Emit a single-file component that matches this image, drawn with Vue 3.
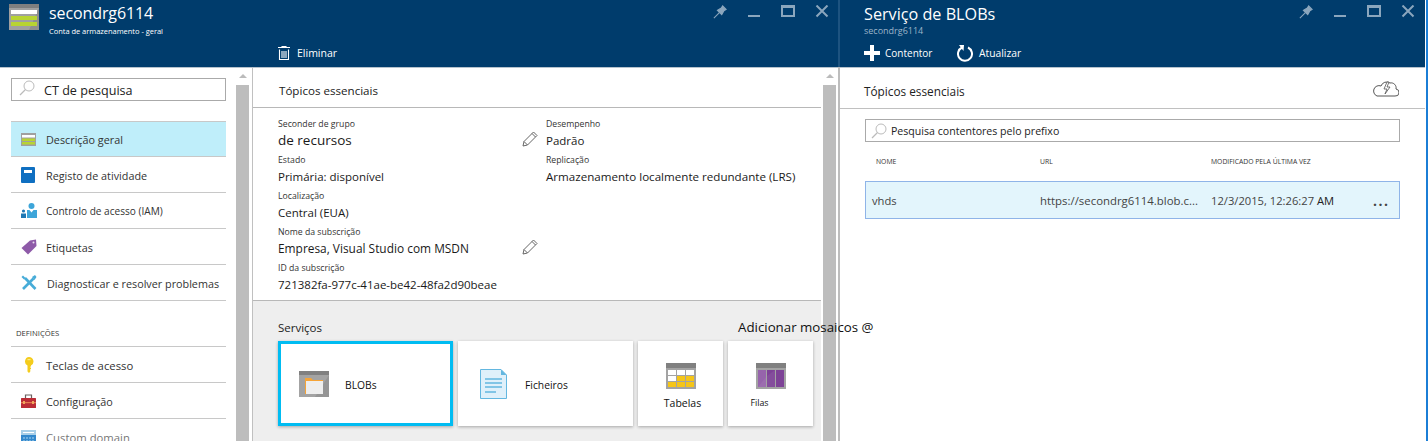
<script setup>
const navTop = [
  { label: 'Descrição geral', icon: 'storage', selected: true, size: 'xs' },
  { label: 'Registo de atividade', icon: 'log', size: 'xs' },
  { label: 'Controlo de acesso (IAM)', icon: 'iam', size: 'xxs' },
  { label: 'Etiquetas', icon: 'tag', size: 'xs' },
  { label: 'Diagnosticar e resolver problemas', icon: 'tools', size: 'xs' },
]
const navSettings = [
  { label: 'Teclas de acesso', icon: 'key' },
  { label: 'Configuração', icon: 'case', size: 'xs' },
  { label: 'Custom domain', icon: 'domain' },
]
const leftFacts = [
  { k: 'Seconder de grupo', v: 'de recursos', cls: 'big', edit: true },
  { k: 'Estado', v: 'Primária: disponível' },
  { k: 'Localização', v: 'Central (EUA)' },
  { k: 'Nome da subscrição', v: 'Empresa, Visual Studio com MSDN', cls: 'mid', edit: true },
  { k: 'ID da subscrição', v: '721382fa-977c-41ae-be42-48fa2d90beae' },
]
const rightFacts = [
  { k: 'Desempenho', v: 'Padrão' },
  { k: 'Replicação', v: 'Armazenamento localmente redundante (LRS)', cls: 'wide' },
]
</script>

<template>
  <div class="page">
    <section class="blade left">
      <header class="head">
        <div class="title-row">
          <svg class="logo" viewBox="0 0 30 26" width="30" height="26">
            <rect width="30" height="26" fill="#a0a0a0" />
            <path d="M30 0V26H20L30 4Z" fill="#8f8f8f" />
            <rect width="30" height="4" fill="#7f7f7f" />
            <rect x="2" y="6" width="26" height="4" fill="#fff" />
            <rect x="2" y="12" width="26" height="4" fill="#b8d432" />
            <rect x="2" y="18" width="26" height="4" fill="#b8d432" />
          </svg>
          <div class="titles">
            <div class="title">secondrg6114</div>
            <div class="subtitle">Conta de armazenamento - geral</div>
          </div>
          <div class="win">
            <svg viewBox="0 0 16 16" width="14" height="14"><path d="M15 5 11 1 9.500 3.500 5 6 10 11 12.500 6.500ZM7 9 1 15" fill="#8ba6bd" stroke="#8ba6bd" stroke-width="1.200" /></svg>
            <svg viewBox="0 0 14 14" width="14" height="14"><rect x="1" y="10" width="12" height="2" fill="#8ba6bd" /></svg>
            <svg viewBox="0 0 14 14" width="14" height="14"><path d="M0 0H14V12H0ZM2 3V10H12V3Z" fill="#8ba6bd" fill-rule="evenodd" /></svg>
            <svg viewBox="0 0 14 14" width="14" height="14"><path d="M1.500 .5 12.500 11.500M12.500 .5 1.500 11.500" stroke="#8ba6bd" stroke-width="2" /></svg>
          </div>
        </div>
        <div class="toolbar toolbar-left">
          <svg viewBox="0 0 12 14" width="12" height="14"><path d="M0 1.500H12M1.500 3.500V13.500H10.500V3.500M4 5V12M6 5V12M8 5V12M4 1.500V0.500H8V1.500" fill="none" stroke="#fff" stroke-width="1.100" /></svg>
          <span>Eliminar</span>
        </div>
      </header>

      <div class="body">
        <aside class="nav">
          <div class="nav-search">
            <svg class="lens" viewBox="0 0 16 16" width="16" height="16"><circle cx="10" cy="6" r="5" fill="none" stroke="#bbb" /><path d="M6.500 9.500 1 15" stroke="#bbb" stroke-width="1.200" /></svg>
            <span>CT de pesquisa</span>
          </div>
          <ul class="nav-list top">
            <li v-for="n in navTop" :key="n.label" :class="[n.size, { selected: n.selected }]">
              <span class="nav-ico">
                <svg v-if="n.icon === 'storage'" viewBox="0 0 15 13" width="15" height="13"><rect width="15" height="13" fill="#a0a0a0" /><rect x="1" y="2" width="13" height="2.500" fill="#fff" /><rect x="1" y="5.500" width="13" height="2.500" fill="#b8d432" /><rect x="1" y="9" width="13" height="2.500" fill="#b8d432" /></svg>
                <svg v-else-if="n.icon === 'log'" viewBox="0 0 14 16" width="14" height="16"><rect width="14" height="16" rx="1" fill="#0f6fc1" /><rect x="3" y="3" width="8" height="3" fill="#fff" /></svg>
                <svg v-else-if="n.icon === 'iam'" viewBox="0 0 16 15" width="16" height="15"><circle cx="10.500" cy="3" r="3" fill="#3da5d9" /><path d="M6 15V7H8.500L10.500 9.500 12.500 7H16V15Z" fill="#3da5d9" /><circle cx="2.500" cy="8" r="1.600" fill="#1f78b4" /><path d="M0 15V10.500H5V15Z" fill="#1f78b4" /></svg>
                <svg v-else-if="n.icon === 'tag'" viewBox="0 0 16 16" width="16" height="16"><path d="M9 1.500 15 0.500 15.500 7 7 15.500 0.500 9Z" fill="#8e5aa8" /><circle cx="12.500" cy="3.500" r="1" fill="#e8dcef" /></svg>
                <svg v-else-if="n.icon === 'tools'" viewBox="0 0 16 16" width="16" height="16"><path d="M4 3 14.500 14" stroke="#47acd8" stroke-width="2.600" /><path d="M12.500 3.500 2 14" stroke="#47acd8" stroke-width="2.600" /><path d="M1 1.500 2 0.500 4.500 3 3 4.500 .5 2ZM11 2 14 0 15.500 2 13.500 5Z" fill="#47acd8" /></svg>
              </span>
              <span :class="['nav-label', n.icon === 'tools' && 'nudge']">{{ n.label }}</span>
            </li>
          </ul>
          <div class="nav-heading">DEFINIÇÕES</div>
          <ul class="nav-list">
            <li v-for="n in navSettings" :key="n.label" :class="[n.size, { faded: n.icon === 'domain' }]">
              <span class="nav-ico">
                <svg v-if="n.icon === 'key'" class="key" viewBox="0 0 10 16" width="10" height="16"><path d="M5 0A4.500 4.500 0 0 1 7 8.500V9.500H6.300V10.800H7V12H6.300V14.500L5 16 3.500 14.500V8.500A4.500 4.500 0 0 1 5 0Z" fill="#f4cc1c" /><rect x="3.500" y="2" width="3" height="1.200" fill="#fbe88a" /></svg>
                <svg v-else-if="n.icon === 'case'" viewBox="0 0 15 14" width="15" height="14"><rect y="4" width="15" height="10" rx=".5" fill="#bb2c36" /><path d="M4.500 4V1H10.500V4" fill="none" stroke="#6b6060" stroke-width="1.200" /><rect y="8" width="15" height="1.200" fill="#e77a50" /><rect x="2" y="7" width="2" height="3" fill="#f1a65c" /><rect x="11" y="7" width="2" height="3" fill="#f1a65c" /></svg>
                <svg v-else viewBox="0 0 15 14" width="15" height="14"><rect width="15" height="14" fill="#3388cc" /><rect width="15" height="5" fill="#a8cfe8" /><rect x="2" y="2" width="11" height="1" fill="#fff" /><path d="M2 8H13M2 11H13" stroke="#a8d4f0" stroke-dasharray="2 1" /></svg>
              </span>
              <span class="nav-label">{{ n.label }}</span>
            </li>
          </ul>
        </aside>

        <div class="scroll scroll-a"><div class="arrow"></div><div class="thumb"></div></div>

        <main class="main">
          <div class="ess-title">Tópicos essenciais</div>
          <div class="facts">
            <div class="col col-l">
              <div v-for="f in leftFacts" :key="f.k" class="fact">
                <div class="k">{{ f.k }}</div>
                <div :class="['v', f.cls]">{{ f.v }}</div>
                <svg v-if="f.edit" class="pencil" viewBox="0 0 16 16" width="16" height="16"><path d="M1 15 2 10.500 11.500 1 15 4.500 5.500 14ZM2 10.500 5.500 14M10 2.500 13.500 6" fill="none" stroke="#666" stroke-width="1" /></svg>
              </div>
            </div>
            <div class="col">
              <div v-for="f in rightFacts" :key="f.k" class="fact">
                <div class="k">{{ f.k }}</div>
                <div :class="['v', f.cls]">{{ f.v }}</div>
              </div>
            </div>
          </div>
          <div class="services">
            <div class="svc-head">
              <span>Serviços</span>
              <span class="add">Adicionar mosaicos @</span>
            </div>
            <div class="tiles">
              <div class="tile wide active">
                <svg viewBox="0 0 30 26" width="30" height="26"><rect width="30" height="26" fill="#a3a3a3" /><path d="M30 0V26H16L30 4Z" fill="#959595" /><rect width="30" height="4" fill="#808080" /><path d="M6 7H12L14 9H24V23H6Z" fill="#f6a437" /><rect x="7" y="10" width="17" height="13" fill="#eee" /></svg>
                <span class="lbl">BLOBs</span>
              </div>
              <div class="tile wide">
                <svg viewBox="0 0 27 30" width="27" height="30"><path d="M.5.500H21L26.500 6V29.500H.5Z" fill="#dff0fa" stroke="#63b7e0" /><path d="M21 .5V6H26.500Z" fill="#63b7e0" /><path d="M5 10H22M5 14H22M5 18H22M5 23H16" stroke="#63b7e0" stroke-width="1.500" /></svg>
                <span class="lbl files">Ficheiros</span>
              </div>
              <div class="tile narrow">
                <svg viewBox="0 0 30 26" width="30" height="26"><rect width="30" height="26" fill="#a3a3a3" /><rect width="30" height="5" fill="#808080" /><g fill="#fff"><rect x="2" y="7" width="8" height="5" /><rect x="11" y="7" width="8" height="5" /><rect x="20" y="7" width="8" height="5" /><rect x="2" y="13" width="8" height="5" /></g><g fill="#f5c518"><rect x="11" y="13" width="8" height="5" /><rect x="20" y="13" width="8" height="5" /><rect x="2" y="19" width="8" height="5" /><rect x="11" y="19" width="8" height="5" /><rect x="20" y="19" width="8" height="5" /></g></svg>
                <span class="cap">Tabelas</span>
              </div>
              <div class="tile narrow">
                <svg viewBox="0 0 30 26" width="30" height="26"><rect width="30" height="26" fill="#a3a3a3" /><rect width="30" height="5" fill="#808080" /><g fill="#7d4296"><rect x="2" y="7" width="8" height="17" fill="#9664ab" /><rect x="11" y="7" width="8" height="17" /><rect x="20" y="7" width="8" height="17" /></g><path d="M2 24 10 14V24ZM11 13 19 7V24H11Z" fill="#fff" opacity=".06" /></svg>
                <span class="cap small">Filas</span>
              </div>
            </div>
          </div>
        </main>

        <div class="scroll scroll-b"><div class="arrow"></div><div class="thumb"></div></div>
      </div>
    </section>

    <div class="divider"></div>

    <section class="blade right">
      <header class="head head-r">
        <div class="title-row">
          <div class="titles">
            <div class="title title-r">Serviço de BLOBs</div>
            <div class="subtitle-r">secondrg6114</div>
          </div>
          <div class="win">
            <svg viewBox="0 0 16 16" width="14" height="14"><path d="M15 5 11 1 9.500 3.500 5 6 10 11 12.500 6.500ZM7 9 1 15" fill="#8ba6bd" stroke="#8ba6bd" stroke-width="1.200" /></svg>
            <svg viewBox="0 0 14 14" width="14" height="14"><rect x="1" y="10" width="12" height="2" fill="#8ba6bd" /></svg>
            <svg viewBox="0 0 14 14" width="14" height="14"><path d="M0 0H14V12H0ZM2 3V10H12V3Z" fill="#8ba6bd" fill-rule="evenodd" /></svg>
            <svg viewBox="0 0 14 14" width="14" height="14"><path d="M1.500 .5 12.500 11.500M12.500 .5 1.500 11.500" stroke="#8ba6bd" stroke-width="2" /></svg>
          </div>
        </div>
        <div class="toolbar toolbar-right">
          <svg viewBox="0 0 16 16" width="16" height="16"><path d="M6 0H10V6H16V10H10V16H6V10H0V6H6Z" fill="#fff" /></svg>
          <span class="tb-a">Contentor</span>
          <svg viewBox="0 0 16 18" width="16" height="18"><path d="M5 3.500A7 7 0 1 0 11 3.500" fill="none" stroke="#fff" stroke-width="2" /><path d="M2 1 7 1 6.500 7Z" fill="#fff" /></svg>
          <span class="tb-b">Atualizar</span>
        </div>
      </header>
      <div class="r-body">
        <div class="r-ess">
          <span>Tópicos essenciais</span>
          <svg viewBox="0 0 27 17" width="27" height="17"><path d="M5 16H23A3.500 3.500 0 0 0 24 9 5 5 0 0 0 18 3 6 6 0 0 0 9 6 5 5 0 0 0 5 16Z" fill="none" stroke="#555" /><path d="M15 2 12 9H15L13 14 18 7H15L17 2Z" fill="#fff" stroke="#555" stroke-width=".8" /></svg>
        </div>
        <div class="r-search">
          <svg viewBox="0 0 16 16" width="16" height="16"><circle cx="10" cy="6" r="5" fill="none" stroke="#bbb" /><path d="M6.500 9.500 1 15" stroke="#bbb" stroke-width="1.200" /></svg>
          <span>Pesquisa contentores pelo prefixo</span>
        </div>
        <div class="grid heads">
          <span>NOME</span><span>URL</span><span>MODIFICADO PELA ÚLTIMA VEZ</span><span></span>
        </div>
        <div class="grid row">
          <span>vhds</span>
          <span>https://secondrg6114.blob.c...</span>
          <span>12/3/2015, 12:26:27 <em>AM</em></span>
          <span class="dots">...</span>
        </div>
      </div>
    </section>
    <div class="edge"></div>
  </div>
</template>

<style>
html, body { margin: 0; height: 441px; overflow: hidden; background: #fff; }
</style>

<style scoped>
.page {
  display: flex;
  width: 1428px;
  height: 441px;
  overflow: hidden;
  font-family: "Open Sans", "Noto Sans", sans-serif;
  color: #111;
  background: #fff;
}
ul { list-style: none; margin: 0; padding: 0; }
.blade { display: flex; flex-direction: column; height: 441px; }
.left { width: 838px; flex: none; }
.divider { width: 2px; flex: none; background: linear-gradient(#1d5380 67px, #bdbdbd 67px); }
.right { width: 585px; flex: none; }
.edge { flex: 1; background: #1b7ed6; border-left: 1px solid #fff; }
.head {
  height: 68px;
  flex: none;
  background: #003c6c;
  border-bottom: 1px solid #b5c2cd;
  box-sizing: border-box;
  color: #fff;
}
.title-row { display: flex; height: 42px; padding-left: 9px; }
.logo { margin-top: 4px; margin-right: 10px; }
.titles { flex: 1; }
.title { font-size: 16px; line-height: 20px; padding-top: 3px; letter-spacing: -.1px; }
.subtitle { font-size: 7.500px; line-height: 10px; padding-top: 3px; letter-spacing: -.03px; }
.win { display: flex; align-items: flex-start; gap: 20px; padding: 5px 9px 0 0; }
.toolbar { display: flex; align-items: center; height: 22px; font-size: 10.500px; }
.toolbar-left { padding-left: 278px; gap: 7px; }
.body { flex: 1; display: flex; min-height: 0; }
.nav { width: 236px; flex: none; padding: 10px 10px 0 11px; box-sizing: border-box; }
.nav-search {
  height: 23px;
  border: 1px solid #aaa;
  box-sizing: border-box;
  display: flex;
  align-items: center;
  gap: 9px;
  padding-left: 7px;
  font-size: 12.600px;
  color: #222;
}
.nav-search span { padding-top: 1px; }
.lens { margin-top: -3px; }
.nav-list li {
  height: 36px;
  box-sizing: border-box;
  border-top: 1px solid #c8c8c8;
  display: flex;
  align-items: center;
  font-size: 11.300px;
  color: #333;
}
.nav-list li.xs { font-size: 10.800px; }
.nav-list li.xxs { font-size: 10.100px; }
.nav-list.top { margin-top: 20px; border-bottom: 1px solid #c8c8c8; }
.nav-list.top li:first-child { height: 35px; }
.nav-list li.selected { background: #bfeefa; }
.nav-list li.faded { color: #777; }
.nav-ico { width: 35px; display: flex; justify-content: flex-start; padding-left: 10px; box-sizing: border-box; }
.key { margin-left: 3px; }
.nav-label { white-space: nowrap; padding-top: 1px; }
.nudge { margin-left: 1px; }
.nav-heading { font-size: 7.700px; color: #333; height: 45px; box-sizing: border-box; padding: 27px 0 0 5px; }
.scroll { flex: none; background: #fff; display: flex; flex-direction: column; }
.scroll .arrow { height: 17px; }
.scroll .arrow::after {
  content: "";
  display: block;
  width: 0;
  margin: 6px auto 0;
  border: 4px solid transparent;
  border-top: 0;
  border-bottom: 4px solid #bbb;
}
.thumb { flex: 1; background: #bdbdbd; }
.scroll-a { width: 13px; margin-right: 3px; }
.scroll-b { width: 13px; margin: 0 2px; }
.main {
  flex: 1;
  min-width: 0;
  display: flex;
  flex-direction: column;
  border-left: 1px solid #c0c0c0;
}
.ess-title {
  height: 40px;
  box-sizing: border-box;
  padding: 15px 0 0 26px;
  font-size: 11.600px;
  line-height: 16px;
  border-bottom: 1px solid #b8b8b8;
  color: #222;
}
.facts { display: flex; height: 193px; box-sizing: border-box; padding: 9px 0 0 25px; border-bottom: 1px solid #b8b8b8; }
.col { flex: 1; }
.col-l { flex: none; width: 268px; }
.fact { height: 36px; position: relative; }
.k { font-size: 8.700px; line-height: 14px; color: #333; }
.v { font-size: 11.500px; line-height: 19px; color: #1a1a1a; white-space: nowrap; }
.v.big { font-size: 13.500px; }
.v.mid { font-size: 11.900px; }
.v.wide { font-size: 11.600px; }
.pencil { position: absolute; right: 8px; top: 14px; }
.services { flex: 1; background: #eee; padding: 18px 0 0 25px; }
.svc-head {
  display: flex;
  justify-content: space-between;
  font-size: 11.500px;
  line-height: 18px;
  height: 22px;
  color: #222;
}
.add {
  font-size: 13.300px;
  margin-right: -57px;
  margin-top: -1px;
  width: 140px;
  white-space: nowrap;
  color: #111;
  position: relative;
  z-index: 2;
}
.tiles { display: flex; gap: 5px; }
.tile {
  height: 85px;
  background: #fff;
  box-shadow: 0 1px 3px rgba(0, 0, 0, .3);
  box-sizing: border-box;
  display: flex;
  align-items: center;
  font-size: 10.300px;
  color: #111;
}
.tile.wide { width: 175px; padding-left: 21px; gap: 16px; }
.tile.active { border: 3px solid #00bcf2; padding-left: 18px; }
.tile.wide + .tile.wide { padding-left: 22px; }
.lbl { padding-top: 3px; }
.files { margin-left: 2px; }
.tile.narrow { width: 85px; flex-direction: column; justify-content: flex-start; padding-top: 22px; }
.cap { margin-top: 7px; font-size: 10.500px; padding-left: 4px; }
.cap.small { font-size: 8.800px; margin-right: 22px; margin-top: 8px; padding: 0; }
.head-r .title-row { padding-left: 24px; }
.head-r .win { padding-right: 10px; }
.title-r { font-size: 16.200px; padding-top: 4px; line-height: 20px; letter-spacing: 0; }
.subtitle-r { font-size: 9px; color: #9db4c8; line-height: 11px; margin-top: 1px; }
.toolbar-right { padding-left: 24px; }
.tb-a { margin-left: 5px; width: 72px; font-size: 10px; }
.tb-b { margin-left: 6px; font-size: 10.300px; }
.r-body { flex: 1; }
.r-ess {
  height: 41px;
  box-sizing: border-box;
  border-bottom: 1px solid #c0c0c0;
  display: flex;
  justify-content: space-between;
  align-items: flex-start;
  padding: 15px 26px 0 24px;
  font-size: 11.800px;
  line-height: 16px;
  color: #222;
}
.r-ess svg { margin-top: -3px; }
.r-search {
  margin: 10px 25px 0;
  height: 23px;
  width: 535px;
  border: 1px solid #aaa;
  box-sizing: border-box;
  display: flex;
  align-items: center;
  gap: 4px;
  padding-left: 5px;
  font-size: 10.600px;
  color: #222;
}
.grid { display: grid; margin: 0 25px; width: 535px; box-sizing: border-box; }
.heads { font-size: 6.800px; color: #333; padding-left: 11px; height: 39px; align-items: center; grid-template-columns: 164px 171px 1fr 28px; }
.row {
  height: 38px;
  background: #e3f5fc;
  border: 1px solid #8fb4e8;
  align-items: center;
  font-size: 11.200px;
  color: #444;
  padding-left: 6px;
  grid-template-columns: 168px 171px 1fr 28px;
  white-space: nowrap;
}
.row span:nth-child(2) { font-size: 11.400px; }
.row em { font-style: normal; color: #222; }
.dots { font-size: 14px; font-weight: 700; color: #444; letter-spacing: 1.500px; margin-left: 2px; }
</style>
